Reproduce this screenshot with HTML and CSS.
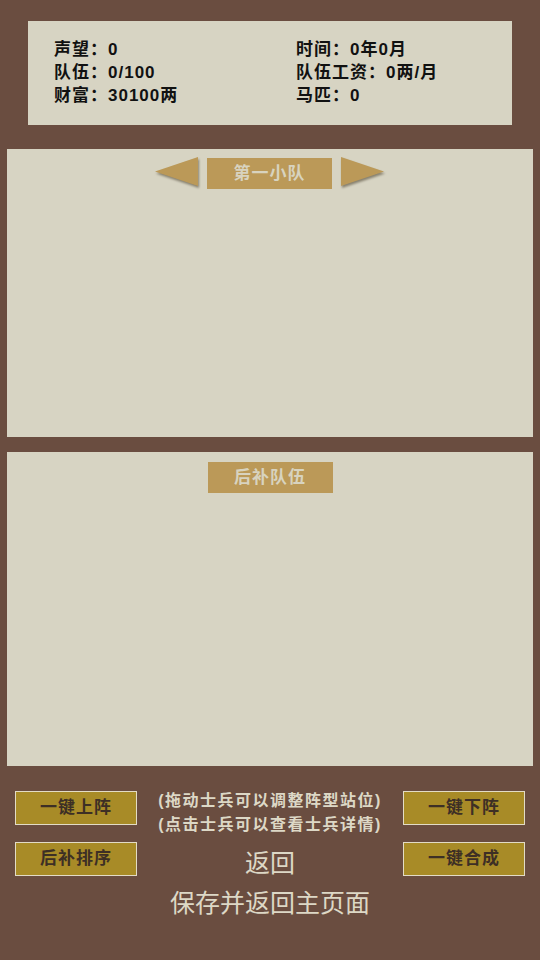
FILE: index.html
```html
<!DOCTYPE html>
<html lang="zh">
<head>
<meta charset="utf-8">
<link rel="stylesheet" href="styles.css">
</head>
<body>
<div class="stats">
  <div class="col">
    <div>声望：0</div>
    <div>队伍：0/100</div>
    <div>财富：30100两</div>
  </div>
  <div class="col">
    <div>时间：0年0月</div>
    <div>队伍工资：0两/月</div>
    <div>马匹：0</div>
  </div>
</div>

<div class="panel squad">
  <div class="head">
    <svg class="arrow" width="44" height="32" viewBox="0 0 44 32"><polygon points="43,0 43,29 0,14.5" fill="#bb9958"/></svg>
    <div class="tag">第一小队</div>
    <svg class="arrow right" width="44" height="32" viewBox="0 0 44 32"><polygon points="0,0 0,29 43,14.5" fill="#bb9958"/></svg>
  </div>
</div>

<div class="panel reserve">
  <div class="head">
    <div class="tag">后补队伍</div>
  </div>
</div>

<div class="controls">
  <div class="btncol">
    <div class="btn">一键上阵</div>
    <div class="btn">后补排序</div>
  </div>
  <div class="mid">
    <div class="tips">(拖动士兵可以调整阵型站位)<br>(点击士兵可以查看士兵详情)</div>
    <div class="back">返回</div>
  </div>
  <div class="btncol">
    <div class="btn">一键下阵</div>
    <div class="btn">一键合成</div>
  </div>
</div>
<div class="save">保存并返回主页面</div>
</body>
</html>
```
FILE: styles.css
```css
html, body {
  margin: 0;
  padding: 0;
}
body {
  background: #6a4d40;
  width: 540px;
  height: 960px;
  overflow: hidden;
  font-family: "Liberation Sans", "Noto Sans CJK SC", sans-serif;
}
.stats {
  margin: 21px 28px 0 28px;
  height: 104px;
  box-sizing: border-box;
  background: #d7d4c3;
  padding: 17px 0 0 26px;
  display: grid;
  grid-template-columns: 242px 1fr;
  font-size: 17px;
  letter-spacing: 1px;
  font-weight: bold;
  line-height: 23px;
  color: #111;
}
.panel {
  background: #d7d4c3;
  margin: 0 7px;
}
.squad {
  margin-top: 24px;
  height: 288px;
  padding-top: 8px;
  box-sizing: border-box;
}
.reserve {
  margin-top: 15px;
  height: 314px;
  padding-top: 10px;
  box-sizing: border-box;
}
.head {
  display: flex;
  justify-content: center;
  align-items: flex-start;
}
.squad .head .tag {
  margin-top: 1px;
}
.arrow {
  display: block;
  filter: drop-shadow(1px 2px 1px rgba(70, 60, 40, 0.55));
  margin-right: 8px;
}
.arrow.right {
  margin-right: 0;
  margin-left: 9px;
}
.tag {
  width: 125px;
  height: 31px;
  background: #bb9958;
  color: #d8d3bf;
  font-size: 17px;
  font-weight: bold;
  line-height: 31px;
  text-align: center;
  letter-spacing: 1px;
}
.controls {
  margin: 23px 15px 0 15px;
  display: flex;
  justify-content: space-between;
}
.btncol {
  padding-top: 2px;
  display: flex;
  flex-direction: column;
  gap: 17px;
  width: 122px;
}
.btn {
  height: 34px;
  box-sizing: border-box;
  border: 1px solid #e3dcc6;
  background: #a88b27;
  color: #3d2f25;
  font-size: 17px;
  font-weight: bold;
  line-height: 32px;
  text-align: center;
  letter-spacing: 1px;
}
.mid {
  flex: 1;
  text-align: center;
  color: #ddd8c6;
}
.tips {
  font-size: 16px;
  font-weight: bold;
  letter-spacing: 1.5px;
  line-height: 24px;
  white-space: nowrap;
}
.back {
  margin-top: 11px;
  font-size: 25px;
  line-height: 30px;
}
.save {
  margin-top: 10px;
  text-align: center;
  color: #ddd8c6;
  font-size: 25px;
  line-height: 30px;
}
```
